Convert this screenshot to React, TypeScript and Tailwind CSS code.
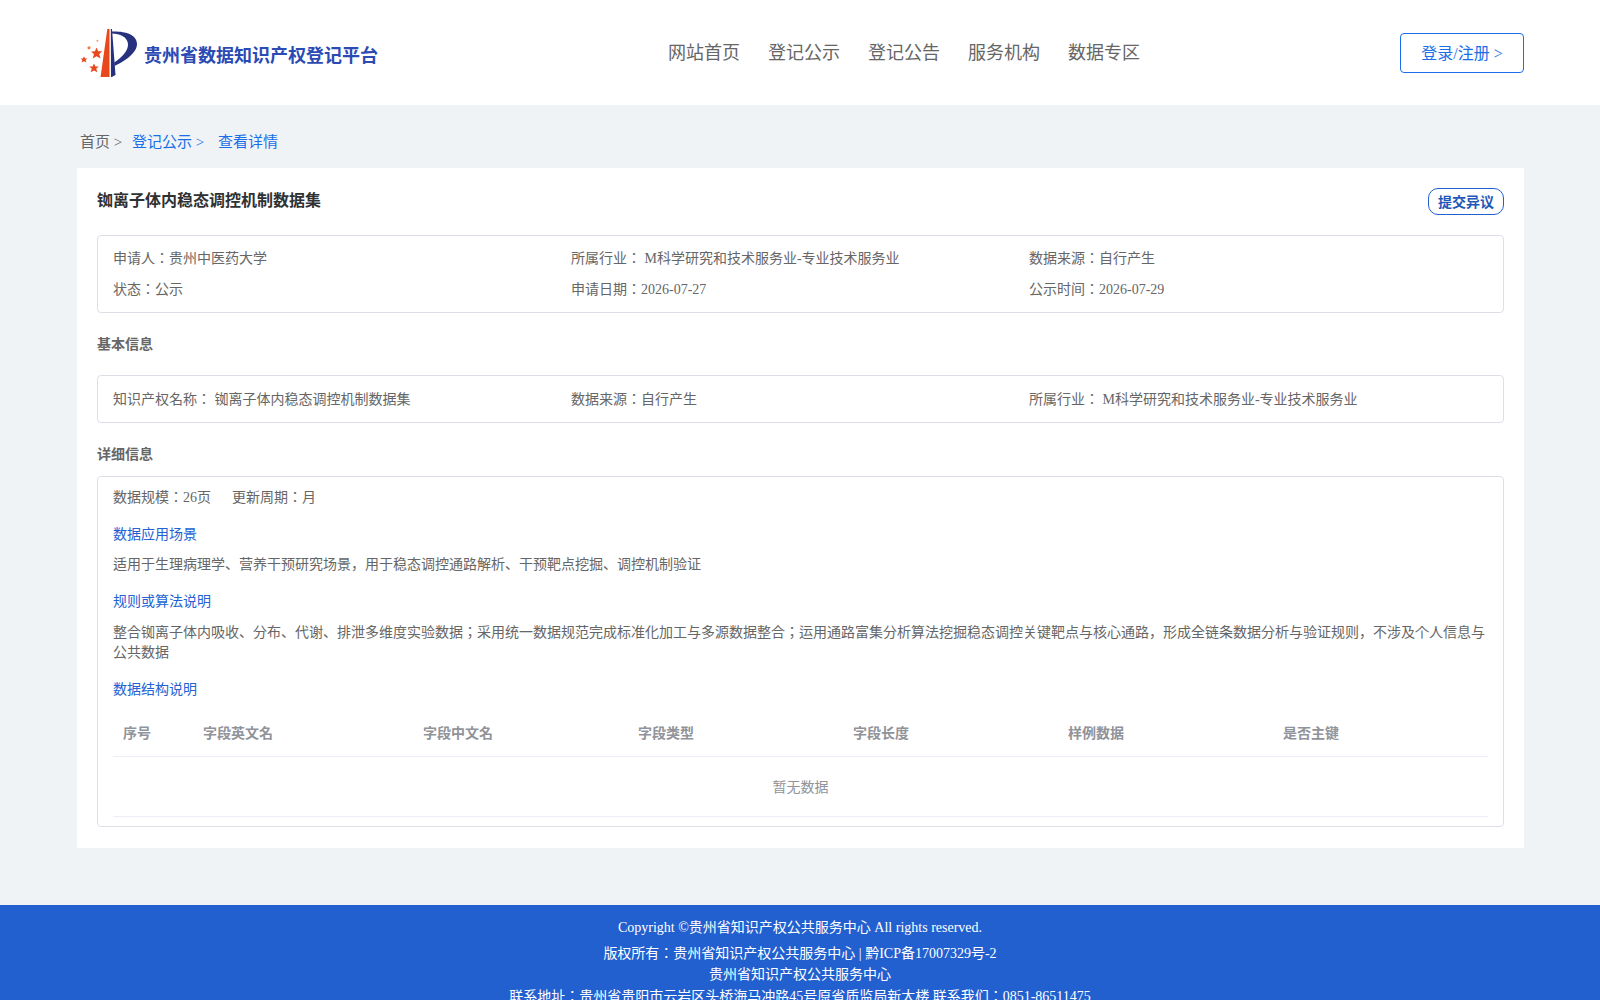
const infoRow1 = ["申请人：贵州中医药大学", "所属行业： M科学研究和技术服务业-专业技术服务业", "数据来源：自行产生"];
const infoRow2 = ["状态：公示", "申请日期：2026-07-27", "公示时间：2026-07-29"];
const basicRow = ["知识产权名称： 铷离子体内稳态调控机制数据集", "数据来源：自行产生", "所属行业： M科学研究和技术服务业-专业技术服务业"];
const navItems = ["网站首页", "登记公示", "登记公告", "服务机构", "数据专区"];
const tableHead = [
  { label: "序号", width: "w-[80px]" },
  { label: "字段英文名", width: "w-[220px]" },
  { label: "字段中文名", width: "w-[215px]" },
  { label: "字段类型", width: "w-[215px]" },
  { label: "字段长度", width: "w-[215px]" },
  { label: "样例数据", width: "w-[215px]" },
  { label: "是否主键", width: "w-[215px]" },
];

function Logo() {
  return (
    <svg viewBox="11 8 56 49" className="w-[56px] h-[49px] shrink-0">
      {/* red blade */}
      <path d="M37.3 9 L30.5 57.5 L39.5 57.5 L39.5 9 Z" fill="#e8481c" />
      {/* navy blade and bowl of the P */}
      <path d="M40.8 9 L41 57.5 L45.5 55 L42 9 Z" fill="#27327f" />
      <path d="M42 11.5 C54 11 67 14 67 24 C67 33 55 41 44.5 46 L44.2 42.5 C51 38 58.5 31 58 24 C57.5 17 50 13.5 42 13.5 Z" fill="#27327f" />
      {/* stars */}
      <polygon points="26.5,27.5 28.2,31.2 32.2,31.2 29.2,34.2 30.6,38.4 26.6,36.2 22.6,38.4 24,34.2 21.2,31.4 25,31.2" fill="#e8481c" />
      <polygon points="24,43.5 25.4,46.4 28.8,46.4 26.2,48.8 27.4,52.2 24,50.4 20.6,52.2 21.8,48.8 19.2,46.6 22.6,46.4" fill="#e8481c" />
      <polygon points="14,36.2 15,38.4 17.4,38.4 15.6,40 16.4,42.4 14,41.2 11.6,42.4 12.4,40 10.6,38.6 13,38.4" fill="#e8481c" />
      <circle cx="19" cy="27.8" r="1.6" fill="#ee7a50" />
      <circle cx="27.4" cy="20.8" r="1" fill="#f09a78" />
    </svg>
  );
}

function InfoCell({ text }: { text: string }) {
  return <div className="w-[458px] h-[30px] leading-[30px] shrink-0">{text}</div>;
}

export default function App() {
  return (
    <div className="min-h-screen bg-[#eff3f6] font-['Liberation_Serif','Noto_Sans_CJK_JP',serif] text-[14px] text-[#666666]">
      {/* header */}
      <header className="h-[105px] bg-white flex items-center pl-[81px] pr-[76px]">
        <div className="flex items-center gap-[7px] w-[296px] shrink-0">
          <Logo />
          <span className="text-[18px] font-bold text-[#2b4ab3] whitespace-nowrap pt-[7px]">贵州省数据知识产权登记平台</span>
        </div>
        <nav className="flex gap-[28px] ml-[291px] pt-[2px] text-[18px] text-[#666666]">
          {navItems.map((item) => (
            <a key={item} className="whitespace-nowrap">{item}</a>
          ))}
        </nav>
        <button className="ml-auto w-[124px] h-[40px] pt-[2px] rounded-[4px] border border-[#1a6fe8] text-[16px] text-[#1a6fe8]">
          登录/注册 &gt;
        </button>
      </header>

      <main className="pl-[77px] pr-[76px]">
        {/* breadcrumb */}
        <div className="h-[63px] pt-[22px] pl-[3px] flex text-[15px] leading-[30px]">
          <span className="w-[52px] whitespace-nowrap">首页 &gt;</span>
          <span className="w-[86px] whitespace-nowrap text-[#1a6fe8]">登记公示 &gt;</span>
          <span className="text-[#1a6fe8]">查看详情</span>
        </div>

        <section className="bg-white px-[20px] pt-[20px] pb-[21px]">
          <div className="flex justify-between h-[27px] mb-[20px]">
            <h1 className="text-[16px] font-bold text-[#303133] leading-[26px]">铷离子体内稳态调控机制数据集</h1>
            <button className="w-[76px] h-[27px] pt-[1px] rounded-[10px] border border-[#2260d0] text-[14px] font-bold text-[#2257b8]">
              提交异议
            </button>
          </div>

          <div className="border border-[#dcdfe6] rounded-[4px] px-[15px] py-[8px]">
            <div className="flex">
              {infoRow1.map((t) => (
                <InfoCell key={t} text={t} />
              ))}
            </div>
            <div className="flex mt-[1px] -mb-[1px]">
              {infoRow2.map((t) => (
                <InfoCell key={t} text={t} />
              ))}
            </div>
          </div>

          <h2 className="mt-[22px] mb-[20px] font-bold leading-[20px]">基本信息</h2>
          <div className="border border-[#dcdfe6] rounded-[4px] px-[15px] pt-[9px] pb-[7px] flex">
            {basicRow.map((t) => (
              <InfoCell key={t} text={t} />
            ))}
          </div>

          <h2 className="mt-[22px] mb-[11px] font-bold leading-[20px]">详细信息</h2>
          <div className="border border-[#dcdfe6] rounded-[4px] px-[15px] pt-[11px] pb-[9px]">
            <div className="flex gap-[21px] leading-[20px]">
              <span>数据规模：26页</span>
              <span>更新周期：月</span>
            </div>
            <h3 className="mt-[17px] leading-[20px] text-[#2262d3]">数据应用场景</h3>
            <p className="mt-[10px] leading-[20px]">
              适用于生理病理学、营养干预研究场景，用于稳态调控通路解析、干预靶点挖掘、调控机制验证
            </p>
            <h3 className="mt-[17px] leading-[20px] text-[#2262d3]">规则或算法说明</h3>
            <p className="mt-[11px] leading-[20px]">
              整合铷离子体内吸收、分布、代谢、排泄多维度实验数据；采用统一数据规范完成标准化加工与多源数据整合；运用通路富集分析算法挖掘稳态调控关键靶点与核心通路，形成全链条数据分析与验证规则，不涉及个人信息与公共数据
            </p>
            <h3 className="mt-[17px] leading-[20px] text-[#2262d3]">数据结构说明</h3>

            <div className="mt-[10px]">
              <div className="flex h-[47px] items-center border-b border-[#ebeef5] font-bold text-[#909399]">
                {tableHead.map((col) => (
                  <div key={col.label} className={`${col.width} pl-[10px] shrink-0`}>{col.label}</div>
                ))}
              </div>
              <div className="h-[60px] pt-[2px] flex items-center justify-center border-b border-[#ebeef5] text-[#909399]">
                暂无数据
              </div>
            </div>
          </div>
        </section>
      </main>

      <footer className="mt-[57px] bg-[#2260d0] text-white text-center pt-[13px] pb-[12px]">
        <p className="leading-[20px] mb-[5px]">Copyright ©贵州省知识产权公共服务中心 All rights reserved.</p>
        <p className="leading-[21px]">版权所有：贵州省知识产权公共服务中心 | 黔ICP备17007329号-2</p>
        <p className="leading-[22px]">贵州省知识产权公共服务中心</p>
        <p className="leading-[22px]">联系地址：贵州省贵阳市云岩区头桥海马冲路45号原省质监局新大楼 联系我们：0851-86511475</p>
      </footer>
    </div>
  );
}
